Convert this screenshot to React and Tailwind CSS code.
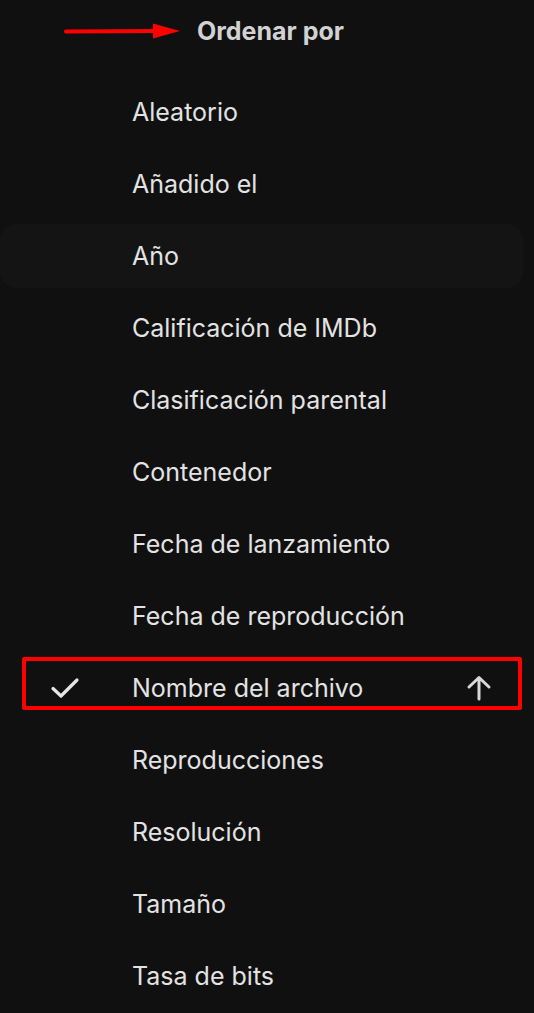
import React from "react";

const items = [
  "Aleatorio",
  "Añadido el",
  "Año",
  "Calificación de IMDb",
  "Clasificación parental",
  "Contenedor",
  "Fecha de lanzamiento",
  "Fecha de reproducción",
  "Nombre del archivo",
  "Reproducciones",
  "Resolución",
  "Tamaño",
  "Tasa de bits",
];

export default function App() {
  return (
    <div
      className="w-[534px] h-[1013px] overflow-hidden bg-[#101010] text-[#e3e3e3]"
      style={{ fontFamily: "Inter, 'Noto Sans', sans-serif" }}
    >
      <div className="relative h-[62px] flex items-center pl-[197px]">
        <svg className="absolute left-[63px] top-[22px]" width="118" height="18" viewBox="0 0 118 18">
          <line x1="3" y1="9.5" x2="95" y2="9" stroke="#ff0000" strokeWidth="4" strokeLinecap="round" />
          <polygon points="90,1.5 117,9 90,16.5" fill="#ff0000" />
        </svg>
        <span className="text-[25px] font-bold text-[#d2d2d2] leading-none">Ordenar por</span>
      </div>
      <div className="mt-[18px] flex flex-col gap-2">
        {items.map((label, i) => {
          const hover = i === 2;
          const selected = label === "Nombre del archivo";
          return (
            <div
              key={label}
              className={`relative h-16 mr-[11px] flex items-center rounded-2xl ${hover ? "bg-[#141414]" : ""}`}
            >
              <div className="w-[132px] flex justify-center pr-[2px]">
                {selected && (
                  <svg width="30" height="22" viewBox="0 0 30 22" className="ml-[-1px]">
                    <path d="M3 11.5 L11 19 L27 3" fill="none" stroke="#e6e6e6" strokeWidth="3.2" strokeLinecap="round" strokeLinejoin="round" />
                  </svg>
                )}
              </div>
              <span className="text-[25px] leading-none flex-1">{label}</span>
              {selected && (
                <>
                  <svg width="26" height="26" viewBox="0 0 26 26" className="mr-[31px]">
                    <path d="M13 24 V3 M3 12 L13 2.5 L23 12" fill="none" stroke="#d8d8d8" strokeWidth="3" strokeLinecap="round" strokeLinejoin="round" />
                  </svg>
                  <div className="absolute left-[22px] right-[1px] top-[1px] bottom-[10px] border-4 border-[#ff0000] rounded-[2px]" />
                </>
              )}
            </div>
          );
        })}
      </div>
    </div>
  );
}
